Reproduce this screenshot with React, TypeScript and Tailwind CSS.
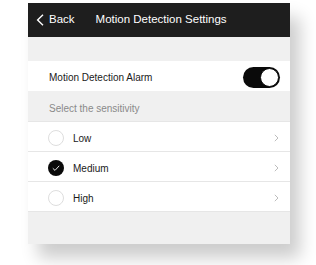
import React from "react";

const font = { fontFamily: '"Liberation Sans", Arial, sans-serif' };

function Chevron() {
  return (
    <svg width="5" height="8" viewBox="0 0 5 8" className="shrink-0">
      <path d="M0.8 0.8 L4 4 L0.8 7.2" fill="none" stroke="#b5b5b5" strokeWidth="0.9" />
    </svg>
  );
}

function Radio({ checked }: { checked: boolean }) {
  if (checked) {
    return (
      <svg width="16" height="16" viewBox="0 0 16 16" className="shrink-0">
        <circle cx="8" cy="8" r="8" fill="#0a0a0a" />
        <path d="M4.8 8.3 L7 10.4 L11.2 5.8" fill="none" stroke="#ffffff" strokeWidth="0.9" />
      </svg>
    );
  }
  return (
    <svg width="16" height="16" viewBox="0 0 16 16" className="shrink-0">
      <circle cx="8" cy="8" r="7.5" fill="#fff" stroke="#d4d4d4" strokeWidth="0.8" />
    </svg>
  );
}

function OptionRow({ label, checked }: { label: string; checked: boolean }) {
  return (
    <div className="h-[30px] flex items-center bg-white border-t border-[#e6e6e6] pl-[20px] pr-[11px] pt-[3px]">
      <Radio checked={checked} />
      <span className="ml-[9px] flex-1 text-[10px] text-[#1a1a1a]">{label}</span>
      <Chevron />
    </div>
  );
}

export default function App() {
  return (
    <div className="w-[316px] h-[265px] bg-white overflow-hidden pl-[28px] pt-[3px]" style={font}>
      <div className="w-[262px] flex flex-col shadow-[10px_14px_16px_rgba(0,0,0,0.2)]">
        <div className="h-[34px] bg-[#1e1e1e] flex items-center text-white">
          <svg width="9" height="12" viewBox="0 0 9 12" className="ml-[8px]">
            <path d="M7 0.8 L1.6 6 L7 11.2" fill="none" stroke="#ffffff" strokeWidth="1.4" />
          </svg>
          <span className="ml-[4px] text-[11.5px]">Back</span>
          <span className="ml-[21px] text-[11.5px]">Motion Detection Settings</span>
        </div>
        <div className="h-[24px] bg-[#f0f0f0]" />
        <div className="h-[30px] bg-white flex items-center pl-[21px] pr-[10px]">
          <span className="flex-1 text-[10px] text-[#1a1a1a] pt-[3px]">Motion Detection Alarm</span>
          <div className="w-[37px] h-[21px] rounded-full bg-[#0a0a0a] flex items-center justify-end pr-[1px] mt-[2px]">
            <div className="w-[19px] h-[19px] rounded-full bg-white border border-[#0a0a0a]" />
          </div>
        </div>
        <div className="h-[30px] bg-[#f0f0f0] flex items-center pl-[21px] pt-[4px]">
          <span className="text-[10px] text-[#8a8a8a]">Select the sensitivity</span>
        </div>
        <OptionRow label="Low" checked={false} />
        <OptionRow label="Medium" checked={true} />
        <OptionRow label="High" checked={false} />
        <div className="h-[33px] bg-[#f0f0f0] border-t border-[#e6e6e6]" />
      </div>
    </div>
  );
}
